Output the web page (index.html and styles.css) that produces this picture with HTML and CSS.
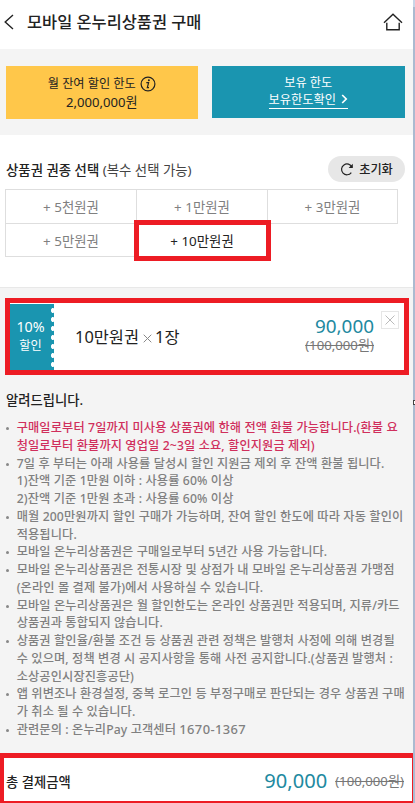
FILE: index.html
```html
<!DOCTYPE html>
<html lang="ko">
<head>
    <meta charset="UTF-8">
    <meta name="viewport" content="width=device-width, initial-scale=1.0">
    <title>모바일 온누리상품권 구매</title>
    <link rel="stylesheet" href="styles.css">
</head>
<body>
    <div class="app">
        <header class="header">
            <svg class="back" width="10" height="16" viewBox="0 0 10 16"><path d="M9 1L1.2 8L9 15"/></svg>
            <h1>모바일 온누리상품권 구매</h1>
            <svg class="home" width="20" height="18" viewBox="0 0 20 18"><path d="M1 9.7L10 1.2L19 9.7M3.8 9.8V16.8H16.2V9.8"/></svg>
        </header>

        <section class="limits">
            <div class="limit monthly">
                <div class="limit-title">월 잔여 할인 한도
                    <svg width="16" height="16" viewBox="0 0 16 16"><circle cx="8" cy="8" r="6.9"/><path d="M6.3 6.7H8.6L7.3 11.6H9"/><circle class="dot" cx="8.9" cy="4.3" r="1"/></svg>
                </div>
                <div class="limit-num">2,000,000원</div>
            </div>
            <div class="limit holding">
                <div>보유 한도</div>
                <a class="check">보유한도확인<svg width="7" height="10" viewBox="0 0 7 10"><path d="M1.2 1L5.2 5L1.2 9"/></svg></a>
            </div>
        </section>

        <section class="select">
            <div class="select-head">
                <h2>상품권 권종 선택 <span>(복수 선택 가능)</span></h2>
                <button class="reset">
                    <svg width="14" height="14" viewBox="0 0 14 14"><path d="M11.3 10.6A5.4 5.4 0 1 1 11.9 5.2"/><path class="tip" d="M12.8 1.8V6.1H8.6Z"/></svg>초기화
                </button>
            </div>
            <div class="types">
                <div class="type">+ 5천원권</div>
                <div class="type">+ 1만원권</div>
                <div class="type">+ 3만원권</div>
                <div class="type">+ 5만원권</div>
                <div class="type on">+ 10만원권</div>
            </div>
        </section>

        <section class="cart">
            <div class="ticket">
                <div class="rate"><b>10%</b>할인</div>
                <div class="name">10만원권<svg width="9" height="9" viewBox="0 0 9 9"><path d="M.7 .7L8.3 8.3M8.3 .7L.7 8.3"/></svg>1장</div>
                <div class="price">
                    <strong>90,000</strong>
                    <del>(100,000원)</del>
                </div>
                <button class="remove"><svg width="10" height="10" viewBox="0 0 10 10"><path d="M.5 .5L9.5 9.5M9.5 .5L.5 9.5"/></svg></button>
            </div>
        </section>

        <section class="notice">
            <h3>알려드립니다.</h3>
            <ul>
                <li class="hot">구매일로부터 7일까지 미사용 상품권에 한해 전액 환불 가능합니다.(환불 요<br>청일로부터 환불까지 영업일 2~3일 소요, 할인지원금 제외)</li>
                <li>7일 후 부터는 아래 사용률 달성시 할인 지원금 제외 후 잔액 환불 됩니다.<br>1)잔액 기준 1만원 이하 : 사용률 60% 이상<br>2)잔액 기준 1만원 초과 : 사용률 60% 이상</li>
                <li>매월 200만원까지 할인 구매가 가능하며, 잔여 할인 한도에 따라 자동 할인이<br>적용됩니다.</li>
                <li>모바일 온누리상품권은 구매일로부터 5년간 사용 가능합니다.</li>
                <li>모바일 온누리상품권은 전통시장 및 상점가 내 모바일 온누리상품권 가맹점<br>(온라인 몰 결제 불가)에서 사용하실 수 있습니다.</li>
                <li>모바일 온누리상품권은 월 할인한도는 온라인 상품권만 적용되며, 지류/카드<br>상품권과 통합되지 않습니다.</li>
                <li>상품권 할인율/환불 조건 등 상품권 관련 정책은 발행처 사정에 의해 변경될<br>수 있으며, 정책 변경 시 공지사항을 통해 사전 공지합니다.(상품권 발행처 :<br>소상공인시장진흥공단)</li>
                <li>앱 위변조나 환경설정, 중복 로그인 등 부정구매로 판단되는 경우 상품권 구매<br>가 취소 될 수 있습니다.</li>
                <li>관련문의 : 온누리Pay 고객센터 <span class="tel">1670-1367</span></li>
            </ul>
        </section>

        <footer class="total">
            <span class="label">총 결제금액</span>
            <strong>90,000</strong>
            <del>(100,000원)</del>
        </footer>
    </div>
    <div class="handle"></div>
</body>
</html>
```

FILE: styles.css
```css
* {
    box-sizing: border-box;
}
body {
    margin: 0;
    position: relative;
    height: 803px;
    overflow: hidden;
    background: linear-gradient(#c9d6e8 7px, #abbad0 7px);
    font-family: "Noto Sans", "Noto Sans CJK KR", sans-serif;
    font-size: 12.2px;
    color: #222;
}
h1, h2, h3, ul {
    margin: 0;
    padding: 0;
    font-weight: 500;
}
svg {
    fill: none;
    stroke: currentColor;
    flex: none;
}
button {
    font: inherit;
    color: inherit;
    border: 0;
    padding: 0;
}
.app {
    width: 413px;
    height: 803px;
    display: flex;
    flex-direction: column;
    background: #fff;
    white-space: nowrap;
}

/* header */
.header {
    height: 49px;
    padding: 0 10px 6px 4px;
    display: flex;
    align-items: center;
}
.header svg {
    stroke-width: 1.4;
}
.header h1 {
    flex: 1;
    margin: -2px 0 0 13px;
    font-size: 16.4px;
}

/* limits */
.limits {
    height: 86px;
    padding: 17px 8px 0 6px;
    display: grid;
    grid-template-columns: 1fr 1fr;
    gap: 14px;
    align-items: start;
    background: #f4f4f4;
}
.limit {
    height: 53px;
    display: flex;
    flex-direction: column;
    align-items: center;
    justify-content: center;
    line-height: 18px;
}
.monthly {
    margin-right: 1px;
    background: #ffc74a;
}
.limit-title {
    display: flex;
    align-items: center;
    gap: 4px;
}
.limit-title svg {
    stroke-width: 1.2;
}
.limit-title .dot {
    fill: #222;
    stroke: none;
}
.limit-num {
    font-size: 13.1px;
}
.holding {
    height: 52px;
    margin-left: -1px;
    padding-bottom: 2px;
    background: #1a95b0;
    color: #fff;
    line-height: 17px;
}
.check {
    display: flex;
    align-items: center;
    gap: 5px;
    border-bottom: 1px solid #fff;
}
.check svg {
    stroke-width: 1.7;
}

/* voucher types */
.select {
    height: 153px;
    padding: 21px 8px 0 5px;
    border-bottom: 1px solid #e8e8e8;
}
.select-head {
    height: 26px;
    display: flex;
    justify-content: space-between;
    align-items: center;
}
.select-head h2 {
    font-size: 13.4px;
    padding-left: 1px;
}
.select-head span {
    font-weight: 400;
    color: #444;
}
.reset {
    width: 77px;
    height: 26px;
    display: flex;
    align-items: center;
    justify-content: center;
    gap: 5px;
    border-radius: 13px;
    background: #e7e7e7;
    font-weight: 500;
}
.reset svg {
    stroke-width: 1.2;
}
.reset .tip {
    fill: #222;
    stroke: none;
}
.types {
    width: 392px;
    margin-top: 7px;
    display: grid;
    grid-template-columns: 131px 131px 130px;
    grid-auto-rows: 33.5px;
}
.type {
    display: flex;
    align-items: center;
    justify-content: center;
    margin: 0 -1px -1px 0;
    border: 1px solid #dedede;
    font-size: 13.4px;
    color: #808080;
}
.type.on {
    position: relative;
    border-color: #5fb3c4;
    color: #222;
}
.type.on::after {
    content: "";
    position: absolute;
    inset: -4px -4px -5px -3px;
    border: 5px solid #ed1c24;
}

/* cart */
.cart {
    height: 87px;
    padding: 10px 4px 0 5px;
    background: #f4f4f4;
}
.ticket {
    position: relative;
    height: 77px;
    border: 5px solid #ed1c24;
    background: #fff;
    display: flex;
    align-items: center;
}
.rate {
    position: relative;
    width: 44px;
    height: 66px;
    margin-top: 1px;
    padding: 13px 3px 0 0;
    background: #1a95b0;
    color: #fff;
    text-align: center;
    line-height: 19px;
}
.rate b {
    display: block;
    font-size: 14.3px;
    font-weight: 400;
}
.rate::after {
    content: "";
    position: absolute;
    top: 2px;
    right: 0;
    bottom: 0;
    width: 3px;
    background: radial-gradient(ellipse 2px 3px at 60% 50%, #fff 70%, transparent) 0 0 / 3px 9px;
}
.name {
    flex: 1;
    margin: -2px 0 0 21px;
    font-size: 16.4px;
}
.name svg {
    margin: 0 3px 0 4px;
    stroke: #888;
}
.price {
    margin: -3px 30px 0 0;
    display: flex;
    flex-direction: column;
    align-items: flex-end;
}
strong {
    font-size: 18.9px;
    line-height: 20px;
    font-weight: 400;
    color: #2189a0;
}
del {
    font-size: 13.2px;
    line-height: 19px;
    color: #777;
}
.remove {
    position: absolute;
    top: 8px;
    right: 5px;
    width: 18px;
    height: 18px;
    display: flex;
    align-items: center;
    justify-content: center;
    border: 1px solid #e6e6e6;
    background: #fff;
    color: #bbb;
}

/* notice */
.notice {
    height: 378px;
    padding: 15px 0 0 6px;
    background: #f4f4f4;
}
.notice h3 {
    font-size: 13.3px;
    line-height: 20px;
}
.notice ul {
    margin-top: 9px;
    list-style: none;
    line-height: 17.76px;
    letter-spacing: .13px;
    color: #808080;
}
.notice li {
    position: relative;
    padding-left: 10.7px;
}
.notice li::before {
    content: "";
    position: absolute;
    left: 0;
    top: 8px;
    width: 3px;
    height: 3px;
    border-radius: 50%;
    background: #888;
}
.notice .hot {
    color: #d02f5c;
    font-weight: 500;
}
.tel {
    font-size: 12.9px;
    letter-spacing: .4px;
}

/* total */
.total {
    height: 50px;
    padding: 3px 8px 0 2px;
    display: flex;
    align-items: center;
    border: 1px solid #ed1c24;
    border-width: 5px 1px 2px 4px;
}
.total .label {
    flex: 1;
    font-size: 13.3px;
    font-weight: 500;
}
.total strong {
    font-size: 20.1px;
    margin-right: 8px;
}

.handle {
    position: absolute;
    left: 413px;
    top: 400px;
    width: 5px;
    height: 5px;
    border: 1px solid #444;
    background: #fff;
}
```
